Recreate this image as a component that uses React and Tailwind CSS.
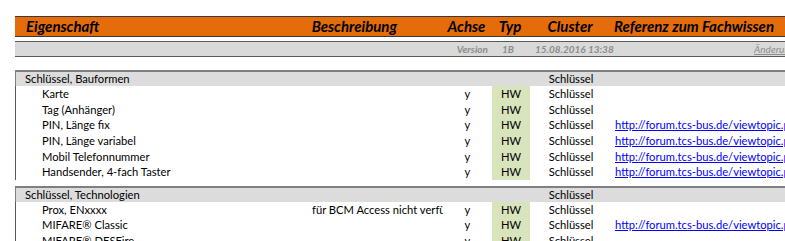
import React from 'react';

const font = { fontFamily: 'Lato, "Open Sans", sans-serif' };

const sections = [
  {
    title: 'Schlüssel, Bauformen',
    rows: [
      { name: 'Karte', desc: '', link: false },
      { name: 'Tag (Anhänger)', desc: '', link: false },
      { name: 'PIN, Länge fix', desc: '', link: true },
      { name: 'PIN, Länge variabel', desc: '', link: true },
      { name: 'Mobil Telefonnummer', desc: '', link: true },
      { name: 'Handsender, 4-fach Taster', desc: '', link: true },
    ],
  },
  {
    title: 'Schlüssel, Technologien',
    rows: [
      { name: 'Prox, ENxxxx', desc: 'für BCM Access nicht verfügbar', link: false },
      { name: 'MIFARE® Classic', desc: '', link: true },
      { name: 'MIFARE® DESFire', desc: '', link: false },
    ],
  },
];

function DataRow({ row }) {
  return (
    <div className="flex h-[15.6px] items-center border-l border-[#595959] text-[11.2px] leading-none text-black">
      <div className="w-[292px] shrink-0 pl-[26px] whitespace-nowrap">{row.name}</div>
      <div className="w-[135px] shrink-0 overflow-hidden whitespace-nowrap pl-[4px]">{row.desc}</div>
      <div className="w-[49px] shrink-0 text-center">y</div>
      <div className="flex h-full w-[38px] shrink-0 items-center justify-center bg-[#d8e4bc]">HW</div>
      <div className="w-[82px] shrink-0 text-center">Schlüssel</div>
      <div className="shrink-0 whitespace-nowrap pl-[3px]">
        {row.link && (
          <span className="text-[#0000ff] underline">http://forum.tcs-bus.de/viewtopic.php</span>
        )}
      </div>
    </div>
  );
}

function Section({ section }) {
  return (
    <div className="flex flex-col">
      <div className="flex h-[16px] items-center border-t-2 border-l border-[#7f7f7f] bg-[#dcdcdc] text-[11.2px] leading-none text-black">
        <div className="w-[427px] shrink-0 pl-[9px] whitespace-nowrap">{section.title}</div>
        <div className="w-[87px] shrink-0" />
        <div className="w-[82px] shrink-0 text-center">Schlüssel</div>
      </div>
      {section.rows.map((row) => (
        <DataRow key={row.name} row={row} />
      ))}
    </div>
  );
}

export default function App() {
  return (
    <div className="h-[241px] w-[785px] overflow-hidden bg-white pt-[16px]" style={font}>
      <div className="ml-[15px] flex w-[800px] flex-col">
        {/* Kopfzeile */}
        <div className="flex h-[21px] items-center border-y border-[#3a3a3a] bg-[#e46c0a] text-[15px] font-bold italic leading-none text-black">
          <div className="w-[292px] shrink-0 pl-[11px]">Eigenschaft</div>
          <div className="w-[135px] shrink-0 pr-[45px] text-right">Beschreibung</div>
          <div className="w-[49px] shrink-0 text-center">Achse</div>
          <div className="w-[38px] shrink-0 text-center">Typ</div>
          <div className="w-[82px] shrink-0 text-center">Cluster</div>
          <div className="shrink-0 whitespace-nowrap pl-[3px]">Referenz zum Fachwissen</div>
        </div>

        {/* Versionszeile */}
        <div className="mt-[4px] flex h-[16px] items-center border-y border-[#595959] bg-[#d9d9d9] text-[10px] font-bold italic leading-none text-[#8c8c8c]">
          <div className="w-[427px] shrink-0" />
          <div className="w-[49px] shrink-0 pr-[3px] text-right">Version</div>
          <div className="w-[38px] shrink-0 pr-[4px] text-center">1B</div>
          <div className="w-[82px] shrink-0 pl-[6px] whitespace-nowrap">15.08.2016 13:38</div>
          <div className="shrink-0 pl-[143px] font-normal underline">Änderungen</div>
        </div>

        <div className="mt-[13px] flex flex-col gap-[6px]">
          {sections.map((s) => (
            <Section key={s.title} section={s} />
          ))}
        </div>
      </div>
    </div>
  );
}
